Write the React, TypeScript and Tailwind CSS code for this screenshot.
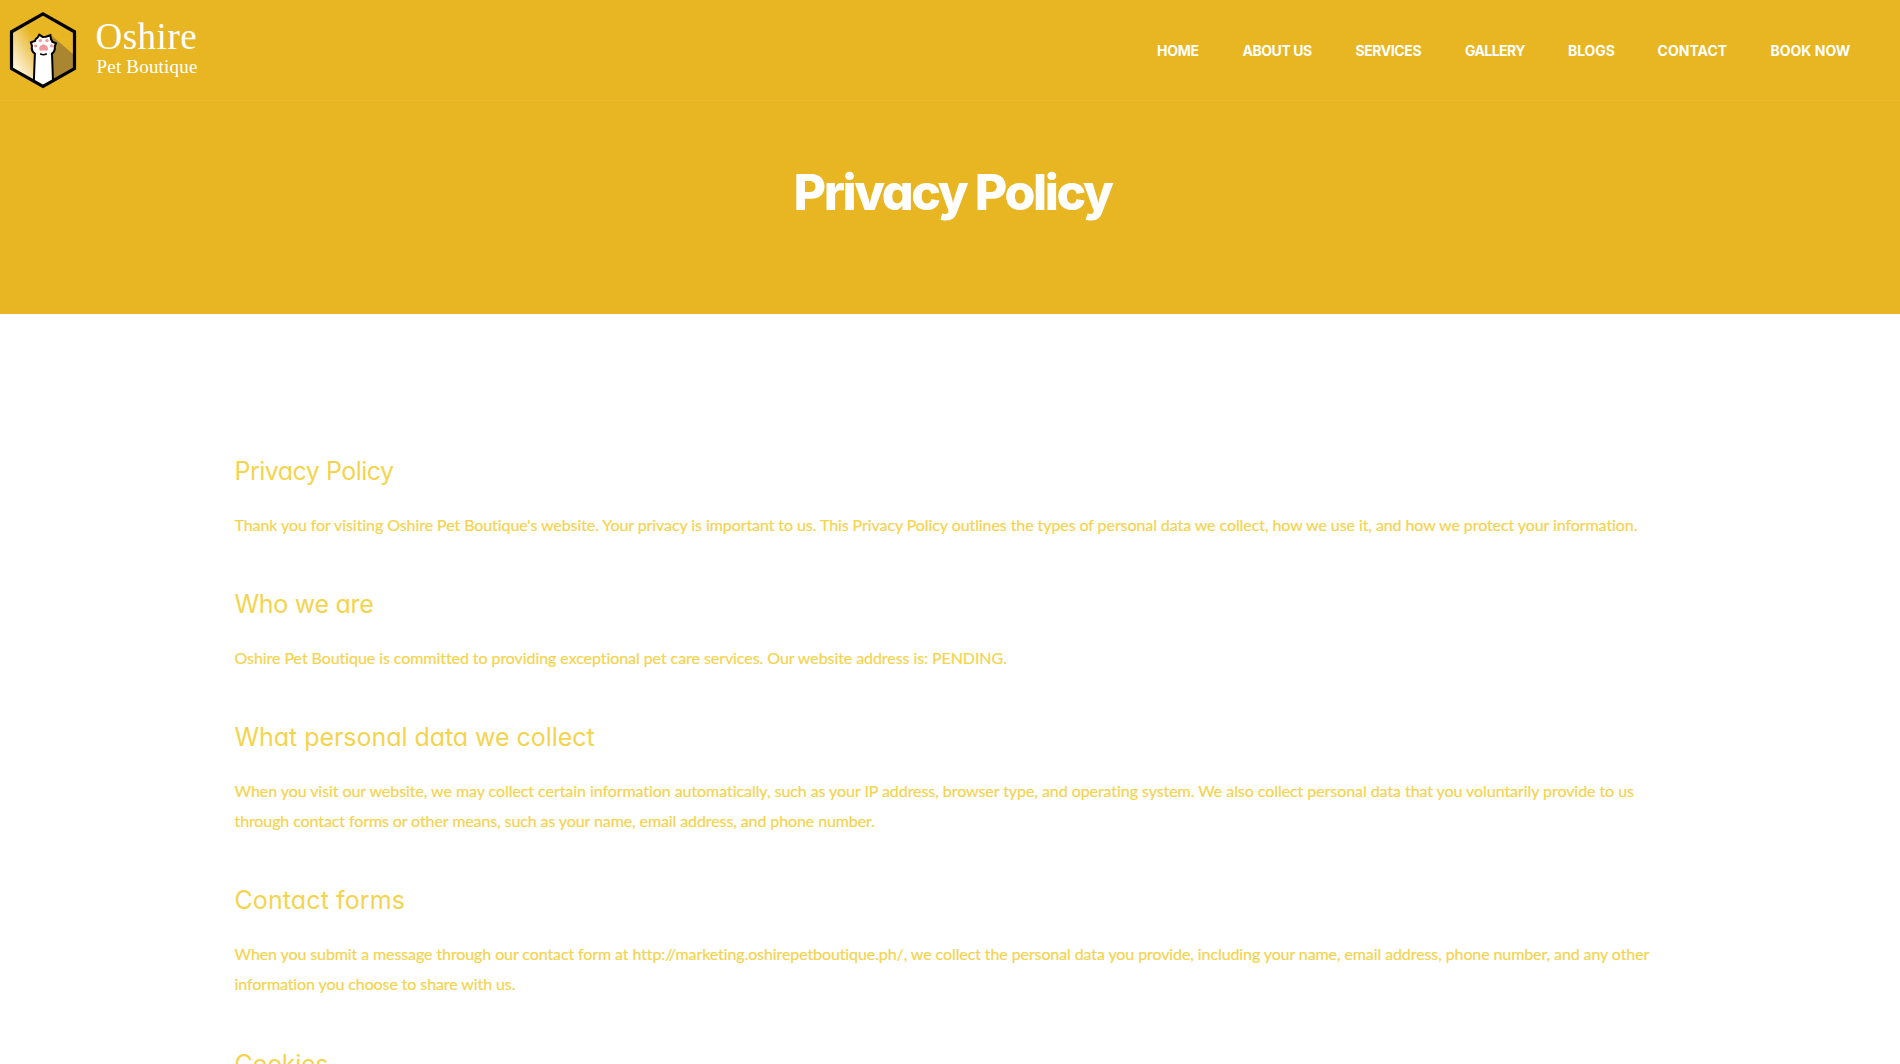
const navItems = [
  { label: "HOME", cls: "w-[85.5px] tracking-[-0.3px]" },
  { label: "ABOUT US", cls: "w-[113px] tracking-[-0.46px]" },
  { label: "SERVICES", cls: "w-[109.5px] tracking-[-0.42px]" },
  { label: "GALLERY", cls: "w-[103px] tracking-[-0.58px]" },
  { label: "BLOGS", cls: "w-[89.5px] tracking-[-0.1px]" },
  { label: "CONTACT", cls: "w-[113px] tracking-[0.03px]" },
  { label: "BOOK NOW", cls: "w-[80.5px] tracking-[0px]" },
];

const sections = [
  {
    title: "Privacy Policy",
    track: "tracking-[-0.52px]",
    lines: [
      {
        text: "Thank you for visiting Oshire Pet Boutique's website. Your privacy is important to us. This Privacy Policy outlines the types of personal data we collect, how we use it, and how we protect your information.",
        track: "tracking-[-0.078px]",
      },
    ],
  },
  {
    title: "Who we are",
    track: "tracking-[-0.3px]",
    lines: [
      {
        text: "Oshire Pet Boutique is committed to providing exceptional pet care services. Our website address is: PENDING.",
        track: "tracking-[-0.068px]",
      },
    ],
  },
  {
    title: "What personal data we collect",
    track: "tracking-[-0.05px]",
    lines: [
      {
        text: "When you visit our website, we may collect certain information automatically, such as your IP address, browser type, and operating system. We also collect personal data that you voluntarily provide to us",
        track: "tracking-[-0.062px]",
      },
      {
        text: "through contact forms or other means, such as your name, email address, and phone number.",
        track: "tracking-[-0.1px]",
      },
    ],
  },
  {
    title: "Contact forms",
    track: "tracking-[0.1px]",
    lines: [
      {
        text: "When you submit a message through our contact form at http://marketing.oshirepetboutique.ph/, we collect the personal data you provide, including your name, email address, phone number, and any other",
        track: "tracking-[-0.097px]",
      },
      { text: "information you choose to share with us.", track: "tracking-[-0.095px]" },
    ],
  },
  { title: "Cookies", track: "tracking-[-0.3px]", lines: [] },
];

function PawLogo() {
  return (
    <svg width="70" height="80" viewBox="8 10 70 80" className="shrink-0" aria-hidden="true">
      <defs>
        <linearGradient id="glow" x1="12" y1="64" x2="40" y2="46" gradientUnits="userSpaceOnUse">
          <stop offset="0" stopColor="#fff6df" />
          <stop offset="0.35" stopColor="#f6dea0" />
          <stop offset="1" stopColor="#e7b622" />
        </linearGradient>
        <clipPath id="hex">
          <path d="M43 13.5 74.5 31.6V68.6L43 86.3 11.5 68.6V31.6Z" />
        </clipPath>
      </defs>
      <path d="M43 13.5 74.5 31.6V68.6L43 86.3 11.5 68.6V31.6Z" fill="url(#glow)" />
      <g clipPath="url(#hex)">
        <path d="M52 36 80 60V84L50 90Z" fill="#a9862f" />
        <path
          d="M33.5 90 34.9 53.5C32.5 52 31.3 48.8 32 46L30.9 42.3 35 41C35.2 39.3 36.2 38 37.8 37.3L39.3 34.6 42.6 36.9 45.9 36.8 50.4 35.2 51 39.2C51.8 40 52.2 40.8 52.3 41.7L56 43.2 54.7 46.6C55.3 50 54.4 52 52 53.6L53.3 90Z"
          fill="#fff"
          stroke="#000"
          strokeWidth="2"
          strokeLinejoin="miter"
        />
      </g>
      <path d="M43.5 44.6C46 44.6 48 46.9 48 48.7 48 50.3 46.8 51 45.6 50.6 44.2 50.3 43 50.3 41.7 50.6 40.4 51 39.2 50.3 39.2 48.7 39.2 46.9 41.2 44.6 43.5 44.6Z" fill="#f5969b" />
      <circle cx="40.3" cy="40.6" r="1.7" fill="#f5969b" />
      <circle cx="47" cy="40.6" r="1.7" fill="#f5969b" />
      <circle cx="35.6" cy="45.8" r="1.6" fill="#f5969b" />
      <circle cx="51.6" cy="45.8" r="1.6" fill="#f5969b" />
      <path d="M40.6 54Q43.5 55.4 46.4 54" fill="none" stroke="#000" strokeWidth="1.4" strokeLinecap="round" />
      <path d="M43 13.8 74.5 31.8V68.6L43 86.4 11.5 68.6V31.8Z" fill="none" stroke="#000" strokeWidth="3.2" />
    </svg>
  );
}

export default function App() {
  return (
    <div className="h-screen overflow-hidden bg-white font-['Inter',sans-serif] [font-feature-settings:'cv11']">
      <div className="h-[314px] bg-[#e7b622]">
        <header className="flex h-[101px] justify-between border-b border-[#e8ba35] pl-2">
          <div className="flex pt-2.5 text-white font-['Liberation_Serif',serif]">
            <PawLogo />
            <div className="ml-[17.5px] whitespace-nowrap">
              <div className="mt-[6.5px] text-[37px] leading-10 tracking-[0.5px]">Oshire</div>
              <div className="-mt-[2px] pl-px text-[19px] leading-6 tracking-[0.2px]">Pet Boutique</div>
            </div>
          </div>
          <nav className="mt-[41px] mr-[49px] flex text-[14px] leading-5 font-bold text-white">
            {navItems.map((item) => (
              <a key={item.label} className={`shrink-0 whitespace-nowrap ${item.cls}`}>
                {item.label}
              </a>
            ))}
          </nav>
        </header>
        <h1 className="mt-[60.5px] pl-[5px] text-center text-[50px] leading-[60px] font-extrabold tracking-[-2.4px] text-white">
          Privacy Policy
        </h1>
      </div>
      <main className="pr-[234px] pl-[234.5px] pt-[140.5px]">
        {sections.map((s) => (
          <section key={s.title} className="mb-[48.3px] text-[#f4d44e]">
            <h2 className={`mb-[21.6px] text-[25px] leading-[33.4px] ${s.track}`}>{s.title}</h2>
            <div className="font-['Lato',sans-serif] text-base leading-[30px] [-webkit-text-stroke:0.2px_#f4d44e]">
              {s.lines.map((line) => (
                <p key={line.text} className={`whitespace-nowrap ${line.track}`}>
                  {line.text}
                </p>
              ))}
            </div>
          </section>
        ))}
      </main>
    </div>
  );
}
